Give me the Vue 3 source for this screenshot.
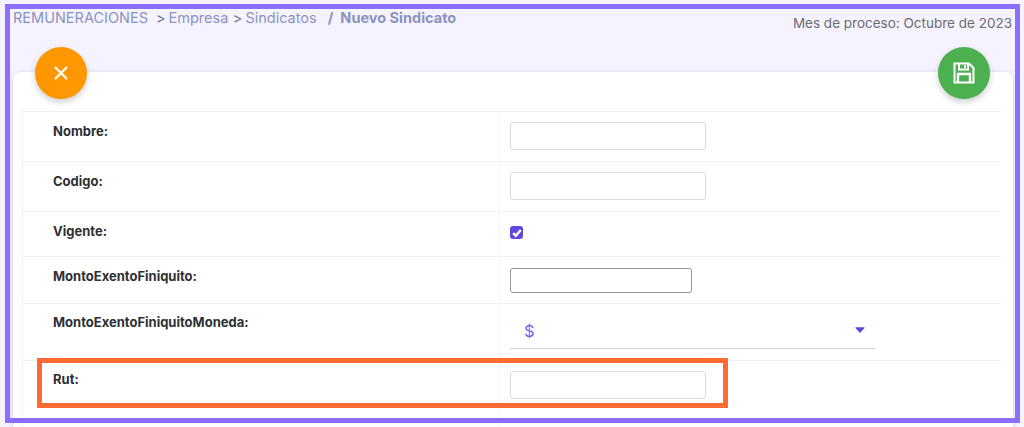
<script setup>
const rows = [
  { label: 'Nombre:', kind: 'input', cls: 'r1' },
  { label: 'Codigo:', kind: 'input', cls: 'r2' },
  { label: 'Vigente:', kind: 'check', cls: 'r3' },
  { label: 'MontoExentoFiniquito:', kind: 'focus', cls: 'r4' },
  { label: 'MontoExentoFiniquitoMoneda:', kind: 'select', cls: 'r5' },
  { label: 'Rut:', kind: 'input', cls: 'r6' }
]
</script>

<template>
  <div class="page">
    <header class="head">
      <div class="crumbs">
        <span>REMUNERACIONES</span>
        <span class="sep1">&gt;</span>
        <span>Empresa</span>
        <span class="sep2">&gt;</span>
        <span>Sindicatos</span>
        <b class="current"><span class="slash">/</span>Nuevo Sindicato</b>
      </div>
      <div class="month">Mes de proceso: Octubre de 2023</div>
    </header>
    <main class="card">
      <button class="fab cancel" type="button" aria-label="Cancelar">
        <svg width="24" height="24" viewBox="0 0 24 24" fill="none" stroke="#fff" stroke-width="2.2"><path d="M6 6l12 12M18 6L6 18" /></svg>
      </button>
      <button class="fab save" type="button" aria-label="Guardar">
        <svg width="22" height="22" viewBox="0 0 22 22" fill="none" stroke="#fff" stroke-width="2"><path d="M1.5 1.5h14.5l4.5 4.5v14.5h-19z" /><path d="M6 1.5v6h9v-6" /><path d="M12 3v3" /><path d="M5 20.5v-8.5h12v8.5" stroke-width="2.4" /></svg>
      </button>
      <div class="table">
        <div v-for="r in rows" :key="r.label" class="row" :class="r.cls">
          <div class="label">{{ r.label }}</div>
          <div class="value">
            <input v-if="r.kind === 'input'" class="text" type="text" />
            <input v-else-if="r.kind === 'focus'" class="text focus" type="text" />
            <span v-else-if="r.kind === 'check'" class="check">
              <svg width="10" height="10" viewBox="0 0 10 10" fill="none" stroke="#fff" stroke-width="2.4"><path d="M1.2 5.2l2.6 2.6 5-5.8" /></svg>
            </span>
            <div v-else class="select">
              <span class="dollar">$</span>
              <svg class="caret" width="10" height="6" viewBox="0 0 10 6"><path d="M0.8 0.3h8.4q.7 0 .3.6L5.5 5.4q-.5.5-1 0L.5.9Q.1.3.8.3z" fill="#6246e0" /></svg>
            </div>
          </div>
        </div>
      </div>
    </main>
    <div class="frame"></div>
    <div class="mark"></div>
  </div>
</template>

<style scoped>
.page {
  position: relative;
  width: 1024px;
  height: 427px;
  overflow: hidden;
  background: #f5f3ff;
  padding: 0 11px 0 13px;
  box-sizing: border-box;
  font-family: Inter, "Liberation Sans", sans-serif;
}
.head {
  height: 72px;
  display: flex;
  justify-content: space-between;
  align-items: flex-start;
}
.crumbs {
  margin-top: 10px;
  font-size: 14.5px;
  line-height: 16px;
  color: #8a93bb;
  white-space: nowrap;
}
.sep1 { margin-left: 8px; margin-right: 3px; color: #6f7280; }
.sep2 { margin-left: 4.5px; margin-right: 3px; color: #6f7280; }
.current { margin-left: 11px; font-weight: 700; }
.slash { margin-right: 7px; }
.month {
  margin-top: 15px;
  margin-right: 1px;
  font-size: 13.5px;
  line-height: 16px;
  color: #6b6b70;
  white-space: nowrap;
}
.card {
  position: relative;
  height: 360px;
  background: #fff;
  border-radius: 8px;
  padding: 39px 12px 0 9px;
  box-shadow: 0 1px 5px rgba(80, 70, 160, 0.22);
}
.fab {
  position: absolute;
  top: -25px;
  width: 52px;
  height: 52px;
  border: 0;
  padding: 0;
  border-radius: 50%;
  display: flex;
  align-items: center;
  justify-content: center;
  box-shadow: 0 3px 6px rgba(0, 0, 0, 0.2);
}
.cancel { left: 22px; background: #ff9800; }
.save { right: 23px; background: #4caf50; }
.table {
  border-top: 1px solid #f1f1f3;
  border-left: 1px solid #f4f4f6;
}
.row {
  display: grid;
  grid-template-columns: 476px 1fr;
  border-bottom: 1px solid #f1f1f3;
  box-sizing: border-box;
}
.r1, .r2 { height: 50px; }
.r3 { height: 45px; }
.r4 { height: 47px; }
.r5 { height: 57px; }
.r6 { height: 70px; border-bottom: 0; }
.label {
  padding: 11px 0 0 30px;
  font-size: 13px;
  line-height: 16px;
  font-weight: 700;
  color: #2f2f33;
}
.r5 .label, .r6 .label { padding-top: 10px; }
.value {
  border-left: 1px solid #f4f4f6;
  padding: 10px 0 0 10px;
}
.text {
  display: block;
  width: 196px;
  height: 28px;
  box-sizing: border-box;
  background: #fff;
  border: 1px solid #dcdcdf;
  border-radius: 3px;
  padding: 0;
  margin: 0;
  outline: 0;
}
.focus {
  width: 182px;
  height: 25px;
  border-color: #939396;
}
.r4 .value { padding-top: 11px; }
.check {
  display: flex;
  align-items: center;
  justify-content: center;
  width: 13px;
  height: 13px;
  margin-top: 4px;
  background: #6246e0;
  border-radius: 3px;
}
.select {
  width: 365px;
  height: 45px;
  box-sizing: border-box;
  border-bottom: 1px solid #d3d3d6;
  display: flex;
  justify-content: space-between;
  align-items: center;
  padding: 0 10px 0 14px;
}
.r5 .value { padding-top: 0; }
.dollar {
  font-size: 16.5px;
  line-height: 20px;
  color: #7461f2;
  margin-top: 9px;
}
.caret {
  margin-top: 7px;
}
.frame {
  position: absolute;
  left: 5px;
  top: 4px;
  width: 1015px;
  height: 419px;
  box-sizing: border-box;
  border: 5px solid #8c6eff;
  pointer-events: none;
}
.mark {
  position: absolute;
  left: 37px;
  top: 358px;
  width: 691px;
  height: 50px;
  box-sizing: border-box;
  border: 5px solid #ff6a33;
  pointer-events: none;
}
</style>
